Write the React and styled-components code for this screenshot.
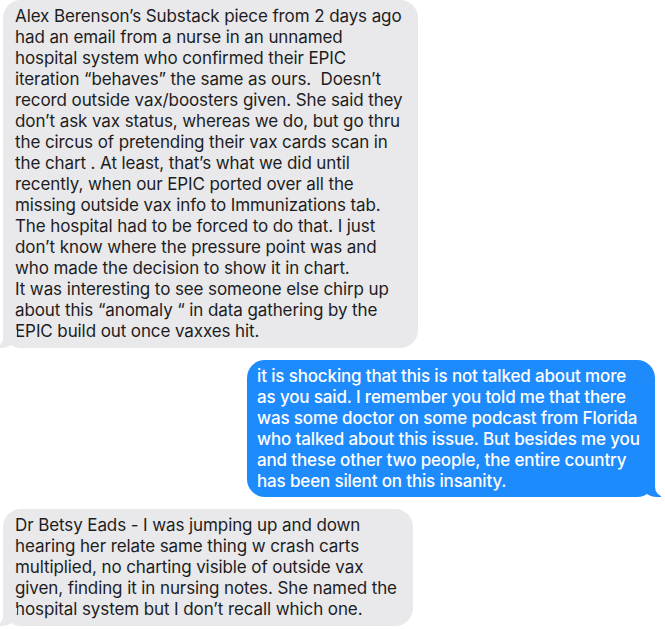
import React from 'react';
import styled, { createGlobalStyle } from 'styled-components';

const GlobalStyle = createGlobalStyle`
  html, body {
    margin: 0;
    padding: 0;
    background: #ffffff;
  }
  body {
    font-family: Inter, "Liberation Sans", sans-serif;
    -webkit-font-smoothing: antialiased;
  }
`;

const messages = [
  {
    from: 'them',
    width: 415,
    lines: [
      'Alex Berenson’s Substack piece from 2 days ago',
      'had an email from a nurse in an unnamed',
      'hospital system who confirmed their EPIC',
      'iteration “behaves” the same as ours.  Doesn’t',
      'record outside vax/boosters given. She said they',
      'don’t ask vax status, whereas we do, but go thru',
      'the circus of pretending their vax cards scan in',
      'the chart . At least, that’s what we did until',
      'recently, when our EPIC ported over all the',
      'missing outside vax info to Immunizations tab.',
      'The hospital had to be forced to do that. I just',
      'don’t know where the pressure point was and',
      'who made the decision to show it in chart.',
      'It was interesting to see someone else chirp up',
      'about this “anomaly “ in data gathering by the',
      'EPIC build out once vaxxes hit.',
    ],
  },
  {
    from: 'me',
    width: 408,
    lines: [
      'it is shocking that this is not talked about more',
      'as you said. I remember you told me that there',
      'was some doctor on some podcast from Florida',
      'who talked about this issue. But besides me you',
      'and these other two people, the entire country',
      'has been silent on this insanity.',
    ],
  },
  {
    from: 'them',
    width: 410,
    lines: [
      'Dr Betsy Eads - I was jumping up and down',
      'hearing her relate same thing w crash carts',
      'multiplied, no charting visible of outside vax',
      'given, finding it in nursing notes. She named the',
      'hospital system but I don’t recall which one.',
    ],
  },
];

export default function App() {
  return (
    <>
      <GlobalStyle />
      <Thread>
        {messages.map((msg, i) => (
          <Row key={i} $mine={msg.from === 'me'}>
            <Bubble $mine={msg.from === 'me'} $width={msg.width}>
              {msg.lines.map((line, j) => (
                <Line key={j}>{line}</Line>
              ))}
            </Bubble>
          </Row>
        ))}
      </Thread>
    </>
  );
}

const Thread = styled.div`
  width: 665px;
  height: 629px;
  overflow: hidden;
  display: flex;
  flex-direction: column;
  gap: 12px;
  padding: 0 10px 0 3px;
  box-sizing: border-box;
`;

const Row = styled.div`
  display: flex;
  justify-content: ${p => (p.$mine ? 'flex-end' : 'flex-start')};
`;

const Bubble = styled.div`
  position: relative;
  width: ${p => p.$width}px;
  box-sizing: border-box;
  padding: 6px 12px ${p => (p.$mine ? '5px' : '6px')};
  padding-left: ${p => (p.$mine ? '10px' : '12px')};
  border-radius: 18px;
  background: ${p => (p.$mine ? '#1e8bfd' : '#e9e9eb')};
  color: ${p => (p.$mine ? '#ffffff' : '#1d1d1f')};
  font-size: 17px;
  font-weight: ${p => (p.$mine ? 500 : 400)};
  line-height: 21px;
  letter-spacing: ${p => (p.$mine ? '-0.15px' : '-0.1px')};

  &::before,
  &::after {
    content: '';
    position: absolute;
    bottom: 0;
    height: 18px;
  }

  &::before {
    width: 20px;
    background: ${p => (p.$mine ? '#1e8bfd' : '#e9e9eb')};
    ${p =>
      p.$mine
        ? 'right: -6px; border-bottom-left-radius: 16px 14px;'
        : 'left: -6px; border-bottom-right-radius: 16px 14px;'}
  }

  &::after {
    width: 26px;
    background: #ffffff;
    ${p =>
      p.$mine
        ? 'right: -26px; border-bottom-left-radius: 10px;'
        : 'left: -26px; border-bottom-right-radius: 10px;'}
  }
`;

const Line = styled.span`
  display: block;
  white-space: pre;
`;
